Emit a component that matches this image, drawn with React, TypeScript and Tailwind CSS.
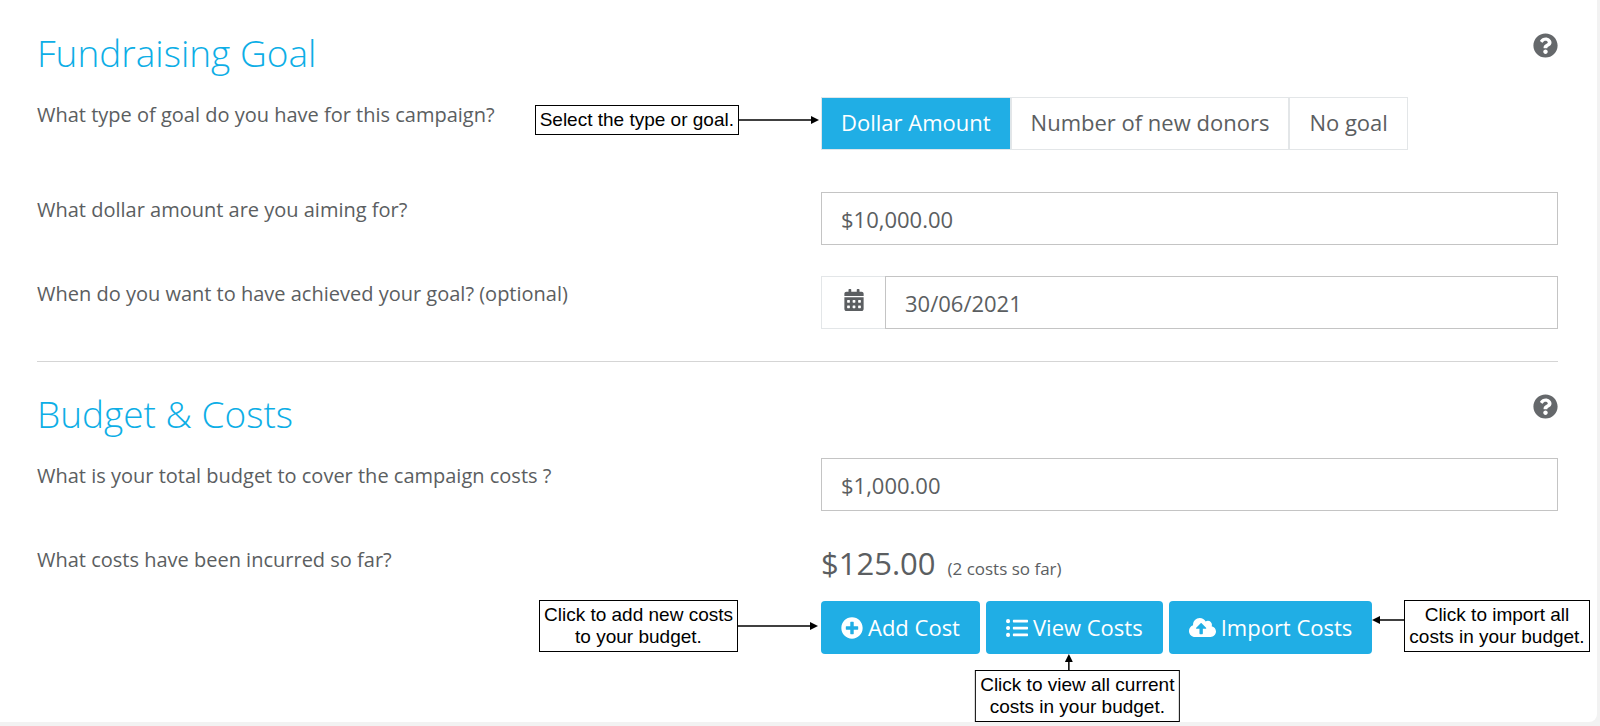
import { useState } from "react";
import type { ReactNode } from "react";
import {
  FaCalendarAlt,
  FaCloudUploadAlt,
  FaListUl,
  FaPlusCircle,
  FaQuestionCircle,
} from "react-icons/fa";

const goalTypes = ["Dollar Amount", "Number of new donors", "No goal"];

const inputClass =
  "block h-[53px] w-full min-w-0 border border-[#c4c4c4] bg-white px-[19px] text-[22px] text-[#5b5e61] outline-none";

const buttonClass =
  "flex h-[53px] items-center gap-[5px] rounded bg-[#20aee5] px-5 text-[22px] whitespace-nowrap text-white";

function Section({ title, children }: { title: string; children: ReactNode }) {
  return (
    <section className="pt-[27px]">
      <div className="mb-[18px] flex items-start justify-between">
        <h2 className="text-[37px] leading-[52px] font-light text-[#0daee6]">{title}</h2>
        <button type="button" aria-label={`Help: ${title}`} className="mt-1.5 text-[#65686b]">
          <FaQuestionCircle size={25} />
        </button>
      </div>
      {children}
    </section>
  );
}

function Row({ label, htmlFor, children }: { label: string; htmlFor?: string; children: ReactNode }) {
  const text = "pt-1 text-[20px] leading-[28px]";
  return (
    <div className="grid grid-cols-2 gap-[47px]">
      {htmlFor ? (
        <label htmlFor={htmlFor} className={text}>
          {label}
        </label>
      ) : (
        <p className={text}>{label}</p>
      )}
      <div className="relative">{children}</div>
    </div>
  );
}

function Note({ children }: { children: ReactNode }) {
  return (
    <div className="border border-black bg-white px-1 py-[3px] text-center font-['Liberation_Sans',Arial,sans-serif] text-[19px] leading-[22px] whitespace-nowrap text-black">
      {children}
    </div>
  );
}

function ArrowRight() {
  return (
    <svg width="80" height="8" viewBox="0 0 80 8" aria-hidden="true">
      <path d="M0 4H74" stroke="#000" strokeWidth="1.5" />
      <path d="M72 0L80 4L72 8Z" />
    </svg>
  );
}

function ArrowLeft() {
  return (
    <svg width="32" height="8" viewBox="0 0 32 8" aria-hidden="true">
      <path d="M6 4H32" stroke="#000" strokeWidth="1.5" />
      <path d="M8 0L0 4L8 8Z" />
    </svg>
  );
}

function ArrowUp() {
  return (
    <svg width="8" height="16" viewBox="0 0 8 16" aria-hidden="true">
      <path d="M4 6V16" stroke="#000" strokeWidth="1.5" />
      <path d="M0 8L4 0L8 8Z" />
    </svg>
  );
}

export default function App() {
  const [goalType, setGoalType] = useState(goalTypes[0]);

  return (
    <div className="min-h-screen bg-[#f2f2f2] pr-[3px] pb-[5px] font-['Open_Sans',sans-serif] text-[#5b5e61]">
      <main className="rounded-br-lg bg-white pr-[39px] pb-[68px] pl-[37px]">
        <Section title="Fundraising Goal">
          <Row label="What type of goal do you have for this campaign?">
            <div role="group" aria-label="Goal type" className="flex">
              {goalTypes.map((type) => (
                <button
                  key={type}
                  type="button"
                  aria-pressed={type === goalType}
                  onClick={() => setGoalType(type)}
                  className={
                    type === goalType
                      ? "h-[53px] border border-[#dfe6ea] bg-[#20aee5] px-[19px] pb-0.5 text-[22px] whitespace-nowrap text-white"
                      : "h-[53px] border border-[#e3e6e8] bg-white px-[19px] pb-0.5 text-[22px] whitespace-nowrap"
                  }
                >
                  {type}
                </button>
              ))}
            </div>
            <div className="absolute top-2 right-full mr-0.5 flex items-center">
              <Note>Select the type or goal.</Note>
              <ArrowRight />
            </div>
          </Row>
          <div className="mt-[42px]">
            <Row label="What dollar amount are you aiming for?" htmlFor="amount">
              <input id="amount" type="text" defaultValue="$10,000.00" className={inputClass} />
            </Row>
          </div>
          <div className="mt-[31px]">
            <Row label="When do you want to have achieved your goal? (optional)" htmlFor="date">
              <div className="flex">
                <span className="flex h-[53px] w-16 shrink-0 justify-center border border-r-0 border-[#e3e6e8] pt-3">
                  <FaCalendarAlt size={22} className="text-[#5b5e61]" />
                </span>
                <input id="date" type="text" defaultValue="30/06/2021" className={inputClass} />
              </div>
            </Row>
          </div>
        </Section>

        <hr className="mt-8 -mb-px border-[#d5d5d5]" />

        <Section title="Budget & Costs">
          <Row label="What is your total budget to cover the campaign costs ?" htmlFor="budget">
            <input id="budget" type="text" defaultValue="$1,000.00" className={inputClass} />
          </Row>
          <div className="mt-[31px]">
            <Row label="What costs have been incurred so far?">
              <p className="flex h-[59px] items-baseline gap-3">
                <span className="text-[31px] leading-[42px]">$125.00</span>
                <span className="text-[17px]">(2 costs so far)</span>
              </p>
              <div className="relative flex gap-1.5">
                <button type="button" className={buttonClass}>
                  <FaPlusCircle />
                  Add Cost
                </button>
                <div className="relative">
                  <button type="button" className={buttonClass}>
                    <FaListUl />
                    View Costs
                  </button>
                  <div className="absolute top-full left-1/2 ml-[3px] flex -translate-x-1/2 flex-col items-center">
                    <div className="pr-4">
                      <ArrowUp />
                    </div>
                    <Note>
                      Click to view all current
                      <br />
                      costs in your budget.
                    </Note>
                  </div>
                </div>
                <div className="relative">
                  <button type="button" className={buttonClass}>
                    <FaCloudUploadAlt size={27} />
                    Import Costs
                  </button>
                  <div className="absolute -top-px left-full flex items-start">
                    <div className="pt-4">
                      <ArrowLeft />
                    </div>
                    <Note>
                      Click to import all
                      <br />
                      costs in your budget.
                    </Note>
                  </div>
                </div>
                <div className="absolute -top-px right-full mr-[3px] flex items-center">
                  <Note>
                    Click to add new costs
                    <br />
                    to your budget.
                  </Note>
                  <ArrowRight />
                </div>
              </div>
            </Row>
          </div>
        </Section>
      </main>
    </div>
  );
}
